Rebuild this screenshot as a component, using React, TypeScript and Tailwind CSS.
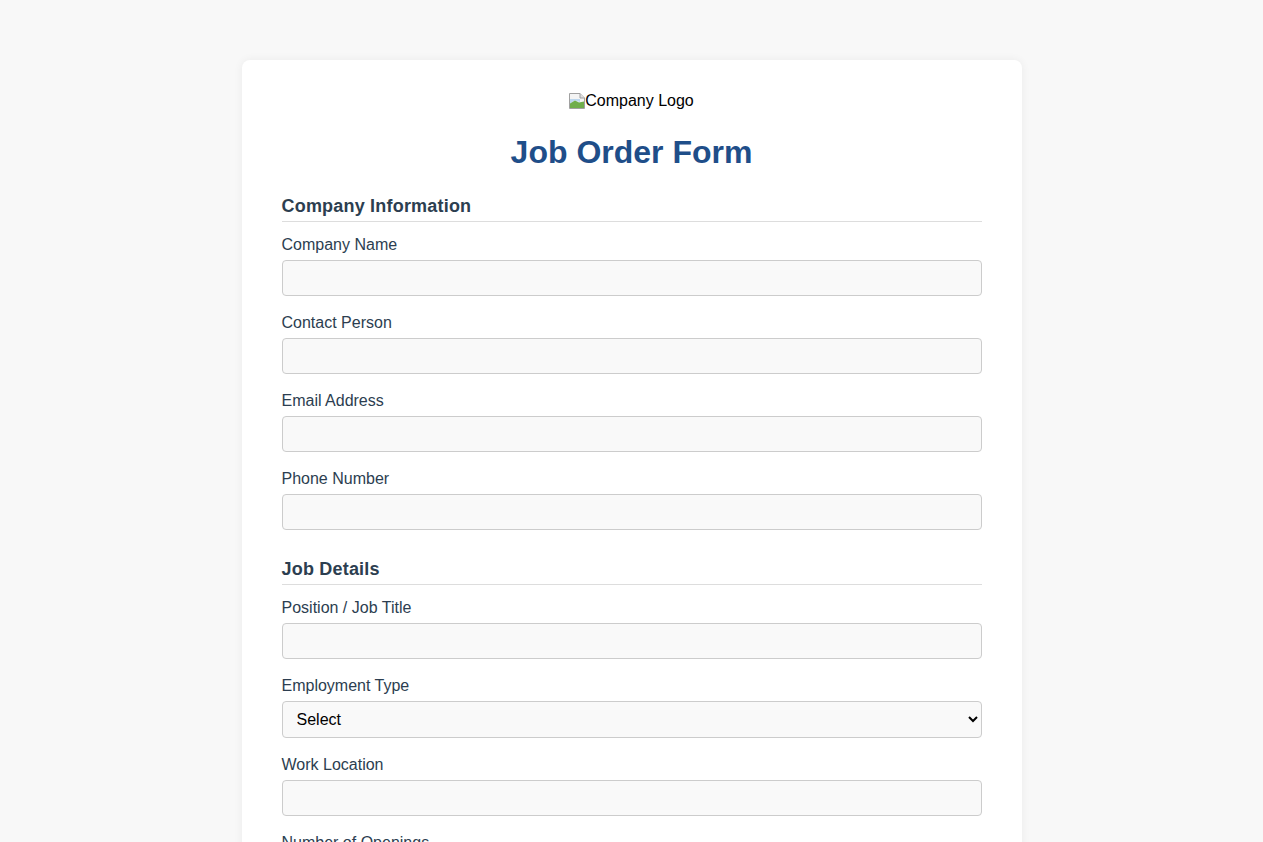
import React from "react";

function BrokenImage() {
  return (
    <svg width="16" height="16" viewBox="0 0 16 16" className="inline-block shrink-0">
      <path d="M0.5 0.5h10.5l4.5 4.5v10.5h-15z" fill="#f4f4f4" stroke="#a0a0a0" />
      <path d="M11 0.5v4.5h4.5" fill="#e0e0e0" stroke="#a0a0a0" />
      <path d="M1 6 H11 V9 L6 7.5 L1 10.5z" fill="#bcd7ee" />
      <path d="M1 10.5 L6 7.5 L10 9.5 L15 8.5 V15 H1z" fill="#6fae4b" />
    </svg>
  );
}

function Field({ label, type = "text" }: { label: string; type?: string }) {
  return (
    <div className="mb-[17px]">
      <label className="block text-[16px] leading-[20px] text-[#2c3e50] mb-[5px]">{label}</label>
      <input
        type={type}
        className="block w-full h-[36px] rounded-[4px] border border-[#cccccc] bg-[#f9f9f9] px-[10px] text-[16px] outline-none"
      />
    </div>
  );
}

function Section({ title, children, first }: { title: string; children: React.ReactNode; first?: boolean }) {
  return (
    <div className={first ? "" : "mt-[29px]"}>
      <h2 className="text-[18px] leading-[21px] font-bold text-[#2c3e50] pb-[4px] border-b border-[#dddddd] mb-[13px] tracking-[0.2px]">
        {title}
      </h2>
      {children}
    </div>
  );
}

export default function App() {
  return (
    <div className="min-h-screen bg-[#f8f8f8] pt-[60px] pb-[60px]" style={{ fontFamily: '"Liberation Sans", Arial, sans-serif' }}>
      <div className="mx-auto w-[780px] bg-white rounded-[8px] shadow-[0_0_10px_rgba(0,0,0,0.06)] px-[40px] pt-[32px] pb-[40px]">
        <div className="text-center text-[16px] leading-[18px] text-black">
          <span className="inline-flex items-center">
            <BrokenImage />
            <span>Company Logo</span>
          </span>
        </div>
        <h1 className="text-center text-[32px] leading-[37px] font-bold text-[#1f4e89] mt-[21px] mb-[25px]">
          Job Order Form
        </h1>
        <Section title="Company Information" first>
          <Field label="Company Name" />
          <Field label="Contact Person" />
          <Field label="Email Address" type="email" />
          <Field label="Phone Number" type="tel" />
        </Section>
        <Section title="Job Details">
          <Field label="Position / Job Title" />
          <div className="mb-[17px]">
            <label className="block text-[16px] leading-[20px] text-[#2c3e50] mb-[5px]">Employment Type</label>
            <select className="block w-full h-[37px] rounded-[4px] border border-[#cccccc] bg-[#f9f9f9] px-[10px] text-[16px] text-black outline-none">
              <option>Select</option>
              <option>Full-time</option>
              <option>Part-time</option>
              <option>Contract</option>
            </select>
          </div>
          <Field label="Work Location" />
          <Field label="Number of Openings" type="number" />
          <Field label="Salary Range" />
        </Section>
      </div>
    </div>
  );
}
